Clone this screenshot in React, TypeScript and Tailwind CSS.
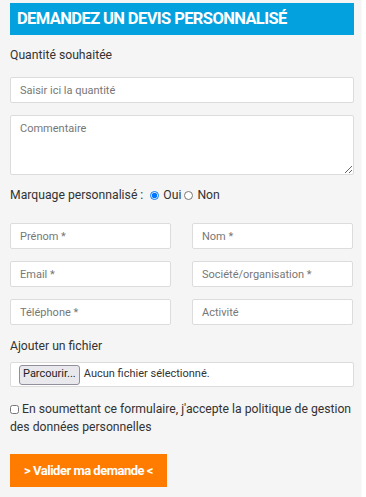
import React from "react";

const inputCls =
  "w-full h-[26px] bg-white border border-[#dcdcdc] rounded-[2px] px-[9px] text-[11px] text-[#555] placeholder:text-[#777] outline-none";

export default function App() {
  return (
    <div className="w-[366px] h-[497px] bg-white flex" style={{ fontFamily: "Roboto, 'Liberation Sans', sans-serif" }}>
      <div className="w-[362px] h-full bg-[#f5f5f5] border-r border-[#fafafa] pl-[10px] pr-[7px] pt-[3px] text-[12.2px] text-[#333]">
        {/* Title */}
        <div className="h-[32px] bg-[#03a2df] flex items-center px-[7px]">
          <h2 className="text-white font-bold text-[16.5px] tracking-[-0.6px] uppercase leading-none">
            Demandez un devis personnalisé
          </h2>
        </div>

        <label className="block mt-[11px] leading-[18px]">Quantité souhaitée</label>
        <input className={`${inputCls} mt-[13px] h-[25px]`} placeholder="Saisir ici la quantité" />

        <textarea
          className="block w-full h-[60px] mt-[12px] bg-white border border-[#dcdcdc] rounded-[2px] px-[9px] py-[5px] text-[11px] placeholder:text-[#777] outline-none resize-y"
          placeholder="Commentaire"
        />

        <div className="flex items-center mt-[11px] h-[18px]">
          <span>Marquage personnalisé :</span>
          <label className="flex items-center ml-[7px]">
            <input type="radio" name="marquage" defaultChecked className="w-[9px] h-[9px] m-0 mr-[4px] accent-[#0075ff]" />
            Oui
          </label>
          <label className="flex items-center ml-[3px]">
            <input type="radio" name="marquage" className="w-[9px] h-[9px] m-0 mr-[4px]" />
            Non
          </label>
        </div>

        <div className="grid grid-cols-2 gap-x-[21px] gap-y-[12px] mt-[19px] pr-[1px]">
          <input className={inputCls} placeholder="Prénom *" />
          <input className={inputCls} placeholder="Nom *" />
          <input className={inputCls} placeholder="Email *" />
          <input className={inputCls} placeholder="Société/organisation *" />
          <input className={inputCls} placeholder="Téléphone *" />
          <input className={inputCls} placeholder="Activité" />
        </div>

        <label className="block mt-[12px] leading-[18px]">Ajouter un fichier</label>
        <div className="mt-[7px] h-[25px] bg-white border border-[#dcdcdc] rounded-[2px] flex items-center pl-[8px] text-[11px]">
          <span className="h-[20px] px-[3px] flex items-center bg-[#e9e9ed] border border-[#8f8f9d] rounded-[3px] text-[#222]">
            Parcourir...
          </span>
          <span className="ml-[4px] text-[#333]">Aucun fichier sélectionné.</span>
        </div>

        <p className="mt-[13px] leading-[18px]">
          <input type="checkbox" className="w-[9px] h-[9px] m-0 mr-[3px] align-[-1px]" />
          En soumettant ce formulaire, j'accepte la politique de gestion des données personnelles
        </p>

        <button className="block mt-[18px] h-[33px] w-[157px] bg-[#ff7c00] text-white font-bold text-[13px] tracking-[-0.5px]">
          &gt; Valider ma demande &lt;
        </button>
      </div>
    </div>
  );
}
